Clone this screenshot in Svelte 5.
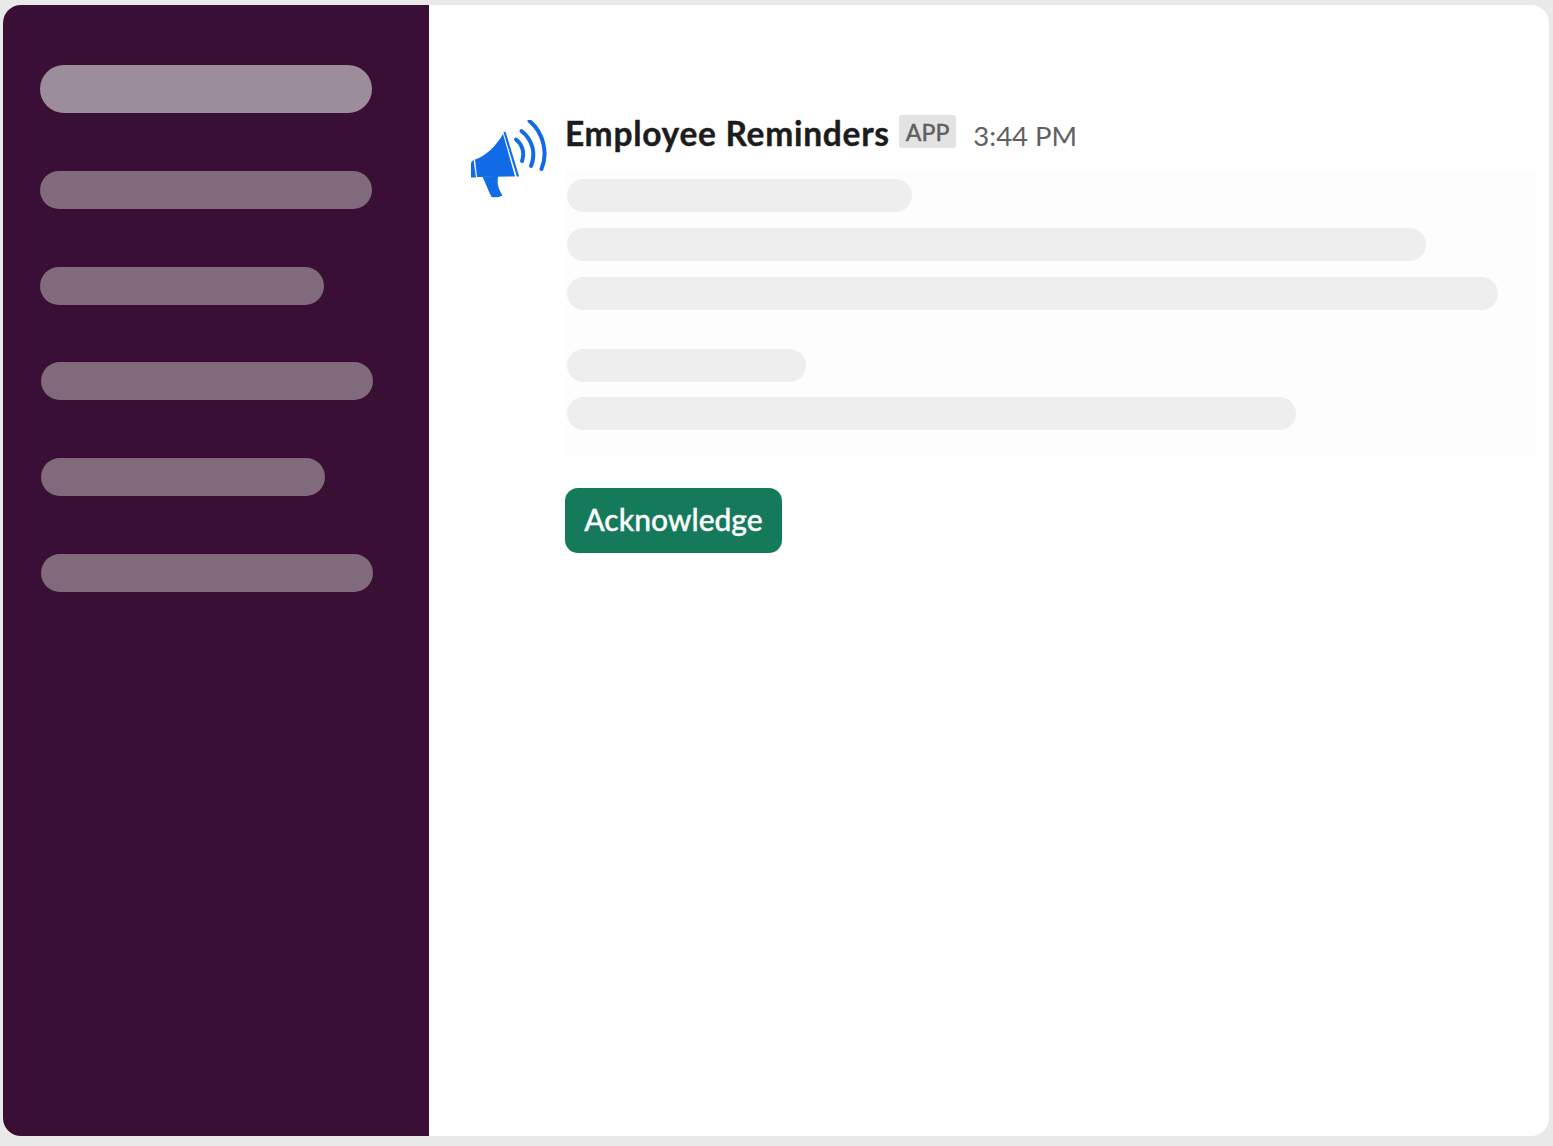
<script>
  // sidebar placeholder rows, widths in px
  const navRows = [
    { width: 332, first: true },
    { width: 332 },
    { width: 284 },
    { width: 332, nudge: true },
    { width: 284, nudge: true },
    { width: 332, nudge: true }
  ]

  // skeleton lines in the message body
  const firstBlock = [345, 859, 931]
  const secondBlock = [239, 729]
</script>

<div class="shell">
  <aside class="sidebar">
    {#each navRows as row}
      <div class="nav-row" class:first={row.first} class:nudge={row.nudge} style="width: {row.width}px"></div>
    {/each}
  </aside>

  <main class="channel">
    <div class="message">
      <svg class="avatar" viewBox="21 20 80 80" aria-hidden="true">
        <path class="fill" d="M20.5 63.5L23.5 59.500L26 77.500H20.500Z" />
        <path class="fill" d="M25 59.500C36 56 46 46 53 34L65 76.500L27 77Z" />
        <path class="rim" d="M54.500 32L68 76.500" />
        <path class="fill" d="M32.500 77L48.500 75.500C47 81 47 87 52.500 95.500C49 97.500 44.500 97.500 41.500 97C38 90 36 84 32.500 77Z" />
        <path class="wave" d="M66 39.500C72 44 75 52 72 61" />
        <path class="wave" d="M71.500 31C83 40 86 54 81 66" />
        <path class="wave" d="M79.500 21C94 33 98 54 91.500 69" />
      </svg>

      <div class="content">
        <div class="header">
          <span class="name">Employee Reminders</span>
          <span class="badge">APP</span>
          <span class="time">3:44 PM</span>
        </div>

        <div class="body">
          <div class="block">
            {#each firstBlock as w}
              <div class="line" style="width: {w}px"></div>
            {/each}
          </div>
          <div class="block tight">
            {#each secondBlock as w}
              <div class="line" style="width: {w}px"></div>
            {/each}
          </div>
        </div>

        <button class="ack">Acknowledge</button>
      </div>
    </div>
  </main>
</div>

<style>
  :global(body) {
    background: #e9e9e9;
    font-family: Lato, "Open Sans", sans-serif;
  }

  .shell {
    display: flex;
    width: 1546px;
    height: 1131px;
    margin: 5px 4px 10px 3px;
    border-radius: 18px;
    overflow: hidden;
    background: #fff;
  }

  .sidebar {
    flex: 0 0 426px;
    box-sizing: border-box;
    padding: 60px 0 0 37px;
    display: flex;
    flex-direction: column;
    align-items: flex-start;
    gap: 58px;
    background: #3a0f36;
  }

  .nav-row {
    height: 38px;
    border-radius: 19px;
    background: #806a7c;
  }

  .nav-row.first {
    height: 48px;
    border-radius: 24px;
    background: #9b8e9a;
  }

  .nav-row.nudge {
    margin-left: 1px;
    margin-top: -1px;
    margin-bottom: 1px;
  }

  .channel {
    flex: 1;
    min-width: 0;
    padding: 110px 14px 0 42px;
  }

  .message {
    display: flex;
    align-items: flex-start;
  }

  .avatar {
    flex: 0 0 80px;
    width: 80px;
    height: 80px;
    margin-top: 5px;
    margin-right: 14px;
  }

  .fill {
    fill: #126be6;
  }

  .rim {
    fill: none;
    stroke: #126be6;
    stroke-width: 2.2;
  }

  .wave {
    fill: none;
    stroke: #126be6;
    stroke-width: 4;
    stroke-linecap: round;
  }

  .content {
    flex: 1;
    min-width: 0;
  }

  .header {
    display: flex;
    align-items: center;
    height: 36px;
  }

  .name {
    font-size: 33.5px;
    font-weight: 700;
    letter-spacing: 0.72px;
    color: #1d1c1d;
    -webkit-text-stroke: 0.4px #1d1c1d;
  }

  .badge {
    margin-left: 9px;
    margin-bottom: 3px;
    padding: 0 7px;
    height: 33px;
    line-height: 35px;
    border-radius: 3px;
    background: #e3e3e3;
    color: #616061;
    font-size: 23px;
    font-weight: 500;
    -webkit-text-stroke: 0.3px #616061;
  }

  .time {
    margin-left: 17px;
    margin-top: 4px;
    font-size: 27.5px;
    color: #616061;
  }

  .body {
    display: flex;
    flex-direction: column;
    gap: 39px;
    margin-top: 19px;
    padding: 9px 0 25px 2px;
    background: #fdfdfd;
  }

  .block {
    display: flex;
    flex-direction: column;
    gap: 16px;
  }

  .block.tight {
    gap: 15px;
  }

  .line {
    height: 33px;
    border-radius: 17px;
    background: #eeeeee;
  }

  .ack {
    display: block;
    margin-top: 33px;
    width: 217px;
    height: 65px;
    padding: 0 0 3px;
    border: 0;
    border-radius: 13px;
    background: #147a5a;
    color: #fff;
    font-family: inherit;
    font-size: 30px;
    font-weight: 500;
    -webkit-text-stroke: 0.35px #fff;
  }
</style>
